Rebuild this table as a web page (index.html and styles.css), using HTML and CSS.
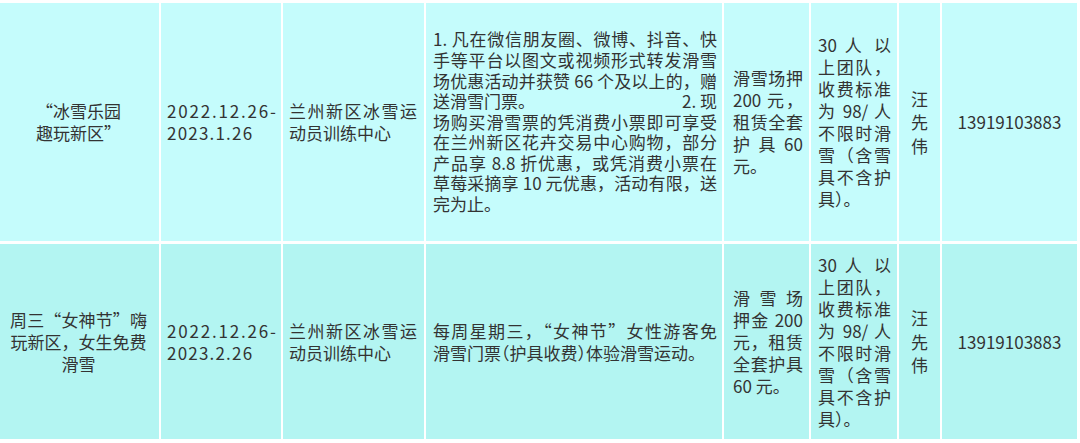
FILE: index.html
```html
<!DOCTYPE html>
<html lang="zh-CN">
<head>
<meta charset="utf-8">
<title>冰雪活动</title>
<link rel="stylesheet" href="styles.css">
</head>
<body>
<div class="table">
  <div class="row row-1">
    <div class="cell col-name">
      <span class="ln">“冰雪乐园</span>
      <span class="ln">趣玩新区”</span>
    </div>
    <div class="cell col-date">
      <span class="ln date-a">2022.12.26-</span>
      <span class="ln date-b">2023.1.26</span>
    </div>
    <div class="cell col-place">
      <span class="ln j">兰州新区冰雪运</span>
      <span class="ln">动员训练中心</span>
    </div>
    <div class="cell col-desc tight">
      <span class="ln j">1. 凡在微信朋友圈、微博、抖音、快</span>
      <span class="ln j">手等平台以图文或视频形式转发滑雪</span>
      <span class="ln j">场优惠活动并获赞 66 个及以上的，赠</span>
      <span class="ln split"><span>送滑雪门票。</span><span>2. 现</span></span>
      <span class="ln j">场购买滑雪票的凭消费小票即可享受</span>
      <span class="ln j">在兰州新区花卉交易中心购物，部分</span>
      <span class="ln j">产品享 8.8 折优惠，或凭消费小票在</span>
      <span class="ln j">草莓采摘享 10 元优惠，活动有限，送</span>
      <span class="ln">完为止。</span>
    </div>
    <div class="cell col-rent">
      <span class="ln j">滑雪场押</span>
      <span class="ln j">200 元，</span>
      <span class="ln j">租赁全套</span>
      <span class="ln j">护 具 60</span>
      <span class="ln">元。</span>
    </div>
    <div class="cell col-group">
      <span class="ln j">30 人 以</span>
      <span class="ln j">上团队，</span>
      <span class="ln j">收费标准</span>
      <span class="ln j">为 98/ 人</span>
      <span class="ln j">不限时滑</span>
      <span class="ln j">雪（含雪</span>
      <span class="ln j">具不含护</span>
      <span class="ln">具）。</span>
    </div>
    <div class="cell col-person">
      <span class="ln">汪</span>
      <span class="ln">先</span>
      <span class="ln">伟</span>
    </div>
    <div class="cell col-phone">
      <span class="ln">13919103883</span>
    </div>
  </div>
  <div class="row row-2">
    <div class="cell col-name">
      <span class="ln j">周三“女神节”嗨</span>
      <span class="ln">玩新区，女生免费</span>
      <span class="ln">滑雪</span>
    </div>
    <div class="cell col-date">
      <span class="ln date-a">2022.12.26-</span>
      <span class="ln date-b">2023.2.26</span>
    </div>
    <div class="cell col-place">
      <span class="ln j">兰州新区冰雪运</span>
      <span class="ln">动员训练中心</span>
    </div>
    <div class="cell col-desc">
      <span class="ln j">每周星期三，“女神节”女性游客免</span>
      <span class="ln">滑雪门票<span class="half">（</span>护具收费<span class="half">）</span>体验滑雪运动。</span>
    </div>
    <div class="cell col-rent">
      <span class="ln j">滑雪场</span>
      <span class="ln j">押金 200</span>
      <span class="ln j">元，租赁</span>
      <span class="ln j">全套护具</span>
      <span class="ln">60 元。</span>
    </div>
    <div class="cell col-group">
      <span class="ln j">30 人 以</span>
      <span class="ln j">上团队，</span>
      <span class="ln j">收费标准</span>
      <span class="ln j">为 98/ 人</span>
      <span class="ln j">不限时滑</span>
      <span class="ln j">雪（含雪</span>
      <span class="ln j">具不含护</span>
      <span class="ln">具）。</span>
    </div>
    <div class="cell col-person">
      <span class="ln">汪</span>
      <span class="ln">先</span>
      <span class="ln">伟</span>
    </div>
    <div class="cell col-phone">
      <span class="ln">13919103883</span>
    </div>
  </div>
</div>
</body>
</html>
```
FILE: styles.css
```css
html, body {
  margin: 0;
  padding: 0;
  background: #ffffff;
}

body {
  width: 1080px;
  height: 443px;
  overflow: hidden;
  font-family: "Noto Sans CJK SC", "Noto Sans", sans-serif;
  font-size: 17px;
  color: #333333;
}

.table {
  display: grid;
  grid-template-columns: 159px 120px 141px 296px 85px 86px 41px 135px;
  grid-template-rows: 238px 195px;
  column-gap: 2px;
  row-gap: 3px;
  padding-top: 3px;
  width: 1077px;
}

.row {
  display: contents;
}

.row-1 > .cell {
  background: #c5fcfc;
}

.row-2 > .cell {
  background: #b3f5f2;
}

.cell {
  display: flex;
  flex-direction: column;
  justify-content: center;
  padding: 0 6px;
  line-height: 22px;
  white-space: nowrap;
  min-width: 0;
}

.ln {
  display: block;
}

.j {
  text-align: justify;
  text-align-last: justify;
}

.split {
  display: flex;
  justify-content: space-between;
}

.half {
  font-feature-settings: "halt" 1;
}

.col-name {
  padding: 0 12px 0 10px;
  text-align: center;
}

.col-date {
  padding: 0 4px 0 6px;
}

.date-a {
  letter-spacing: 1.8px;
}

.date-b {
  letter-spacing: 1.2px;
}

.col-place {
  padding: 0 7px 0 6px;
}

.col-desc {
  padding: 0 5px 0 7px;
}

.col-desc.tight {
  line-height: 20.6px;
}

.col-rent {
  padding: 0 6px 0 9px;
}

.col-group {
  padding: 0 6px 0 7px;
}

.col-person {
  padding: 0;
  text-align: center;
  line-height: 23.5px;
}

.col-phone {
  padding: 0;
  text-align: center;
}
```
